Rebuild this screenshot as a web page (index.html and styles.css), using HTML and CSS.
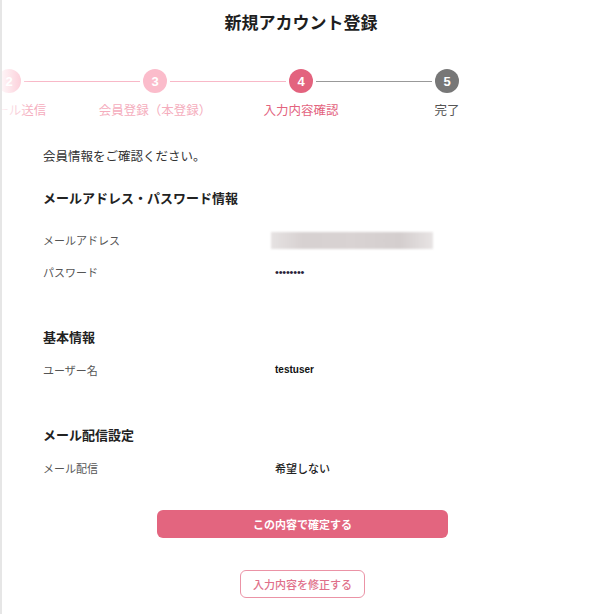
FILE: index.html
```html
<!DOCTYPE html>
<html lang="ja">
<head>
<meta charset="utf-8">
<title>新規アカウント登録</title>
<link rel="stylesheet" href="styles.css">
</head>
<body>
<div class="page">
  <h1 class="title">新規アカウント登録</h1>

  <div class="stepper">
    <div class="track">
      <div class="step done">
        <div class="dot-row"><span class="line pink"></span><span class="dot">2</span><span class="line pink"></span></div>
        <div class="label shifted">メール送信</div>
      </div>
      <div class="step done">
        <div class="dot-row"><span class="line pink"></span><span class="dot">3</span><span class="line pink"></span></div>
        <div class="label">会員登録（本登録）</div>
      </div>
      <div class="step current">
        <div class="dot-row"><span class="line pink"></span><span class="dot">4</span><span class="line gray"></span></div>
        <div class="label">入力内容確認</div>
      </div>
      <div class="step todo">
        <div class="dot-row"><span class="line gray"></span><span class="dot">5</span><span class="line none"></span></div>
        <div class="label">完了</div>
      </div>
    </div>
  </div>

  <div class="content">
    <p class="intro">会員情報をご確認ください。</p>

    <section class="group first">
      <h2 class="group-title">メールアドレス・パスワード情報</h2>
      <div class="row"><span class="key">メールアドレス</span><span class="val"><span class="blurred"></span></span></div>
      <div class="row"><span class="key">パスワード</span><span class="val pw">••••••••</span></div>
    </section>

    <section class="group">
      <h2 class="group-title">基本情報</h2>
      <div class="row"><span class="key">ユーザー名</span><span class="val latin">testuser</span></div>
    </section>

    <section class="group">
      <h2 class="group-title">メール配信設定</h2>
      <div class="row"><span class="key">メール配信</span><span class="val">希望しない</span></div>
    </section>
  </div>

  <div class="actions">
    <button class="btn primary">この内容で確定する</button>
    <button class="btn outline">入力内容を修正する</button>
  </div>
</div>
</body>
</html>
```

FILE: styles.css
```css
html, body {
  margin: 0;
  padding: 0;
  background: #ffffff;
}

body {
  font-family: "Noto Sans CJK JP", "Noto Sans", sans-serif;
  color: #222;
}

.page {
  border-left: 2px solid #e6e6e6;
  min-height: 614px;
  box-sizing: border-box;
  overflow: hidden;
}

.title {
  margin: 0;
  padding-top: 10px;
  font-size: 17px;
  line-height: 24px;
  font-weight: 700;
  text-align: center;
  color: #1e1e1e;
}

/* stepper */
.stepper {
  position: relative;
  margin-top: 35px;
  overflow: hidden;
  height: 50px;
}

.stepper::after {
  content: "";
  position: absolute;
  left: 0;
  top: 0;
  bottom: 0;
  width: 30px;
  background: linear-gradient(to right, rgba(255,255,255,0.85), rgba(255,255,255,0));
}

.track {
  display: flex;
  margin-left: -66px;
}

.step {
  flex: 0 0 146px;
  display: flex;
  flex-direction: column;
  align-items: center;
}

.dot-row {
  display: flex;
  align-items: center;
  width: 100%;
  height: 24px;
}

.line {
  flex: 1;
  height: 1px;
}

.line:first-child { margin-right: 3px; }
.line:last-child { margin-left: 3px; }

.line.pink { background: #f8b8c7; }
.line.gray { background: #999999; }
.line.none { background: transparent; }

.dot {
  flex: 0 0 24px;
  height: 24px;
  border-radius: 50%;
  display: flex;
  align-items: center;
  justify-content: center;
  color: #fff;
  font-family: "Liberation Sans", Arial, sans-serif;
  font-weight: 700;
  font-size: 13px;
}

.label {
  margin-top: 8px;
  font-size: 12.5px;
  line-height: 18px;
  white-space: nowrap;
}

.label.shifted {
  padding-left: 12px;
}

.step.done .dot { background: #fbbccb; }
.step.done .label { color: #f5adbd; }
.step.current .dot { background: #e3637e; }
.step.current .label { color: #e3637e; }
.step.todo .dot { background: #777777; }
.step.todo .label { color: #555; }

/* content */
.content {
  padding-left: 41px;
}

.intro {
  margin: 28px 0 0;
  font-size: 12.5px;
  line-height: 18px;
  color: #333;
}

.group {
  margin-top: 40px;
}

.group.first {
  margin-top: 24px;
}

.group-title {
  margin: 0 0 8px;
  font-size: 13px;
  line-height: 18px;
  font-weight: 700;
  color: #222;
}

.group.first .group-title {
  margin-bottom: 17px;
}

.row {
  display: flex;
  align-items: center;
  padding: 7px 0;
  line-height: 18px;
  height: 18px;
}

.key {
  flex: 0 0 232px;
  font-size: 11px;
  color: #555;
}

.val {
  font-size: 11px;
  font-weight: 500;
  color: #222;
  display: flex;
  align-items: center;
}

.val.latin {
  font-family: "Liberation Sans", Arial, sans-serif;
  font-weight: 700;
  font-size: 10px;
  color: #111;
}

.val.pw {
  font-family: "Liberation Sans", Arial, sans-serif;
  font-size: 11px;
  letter-spacing: -0.2px;
  color: #2a1f3a;
}

.blurred {
  display: block;
  width: 162px;
  height: 17px;
  margin-left: -4px;
  background: linear-gradient(to right, #e6e2e2, #d7d1d1 20%, #d9d3d3 50%, #d4cece 80%, #e8e4e4);
  filter: blur(1px);
}

/* actions */
.actions {
  display: flex;
  flex-direction: column;
  align-items: center;
  gap: 32px;
  margin-top: 26px;
}

.btn {
  font-family: "Noto Sans CJK JP", "Noto Sans", sans-serif;
  font-size: 11px;
  font-weight: 700;
  height: 28px;
  border-radius: 6px;
  cursor: pointer;
  padding: 0;
}

.btn.primary {
  width: 291px;
  margin-left: 3px;
  background: #e3657f;
  border: none;
  color: #fff;
}

.btn.outline {
  width: 125px;
  margin-left: 3px;
  background: #fff;
  border: 1px solid #eb93a6;
  color: #e0708a;
  font-weight: 500;
}
```
